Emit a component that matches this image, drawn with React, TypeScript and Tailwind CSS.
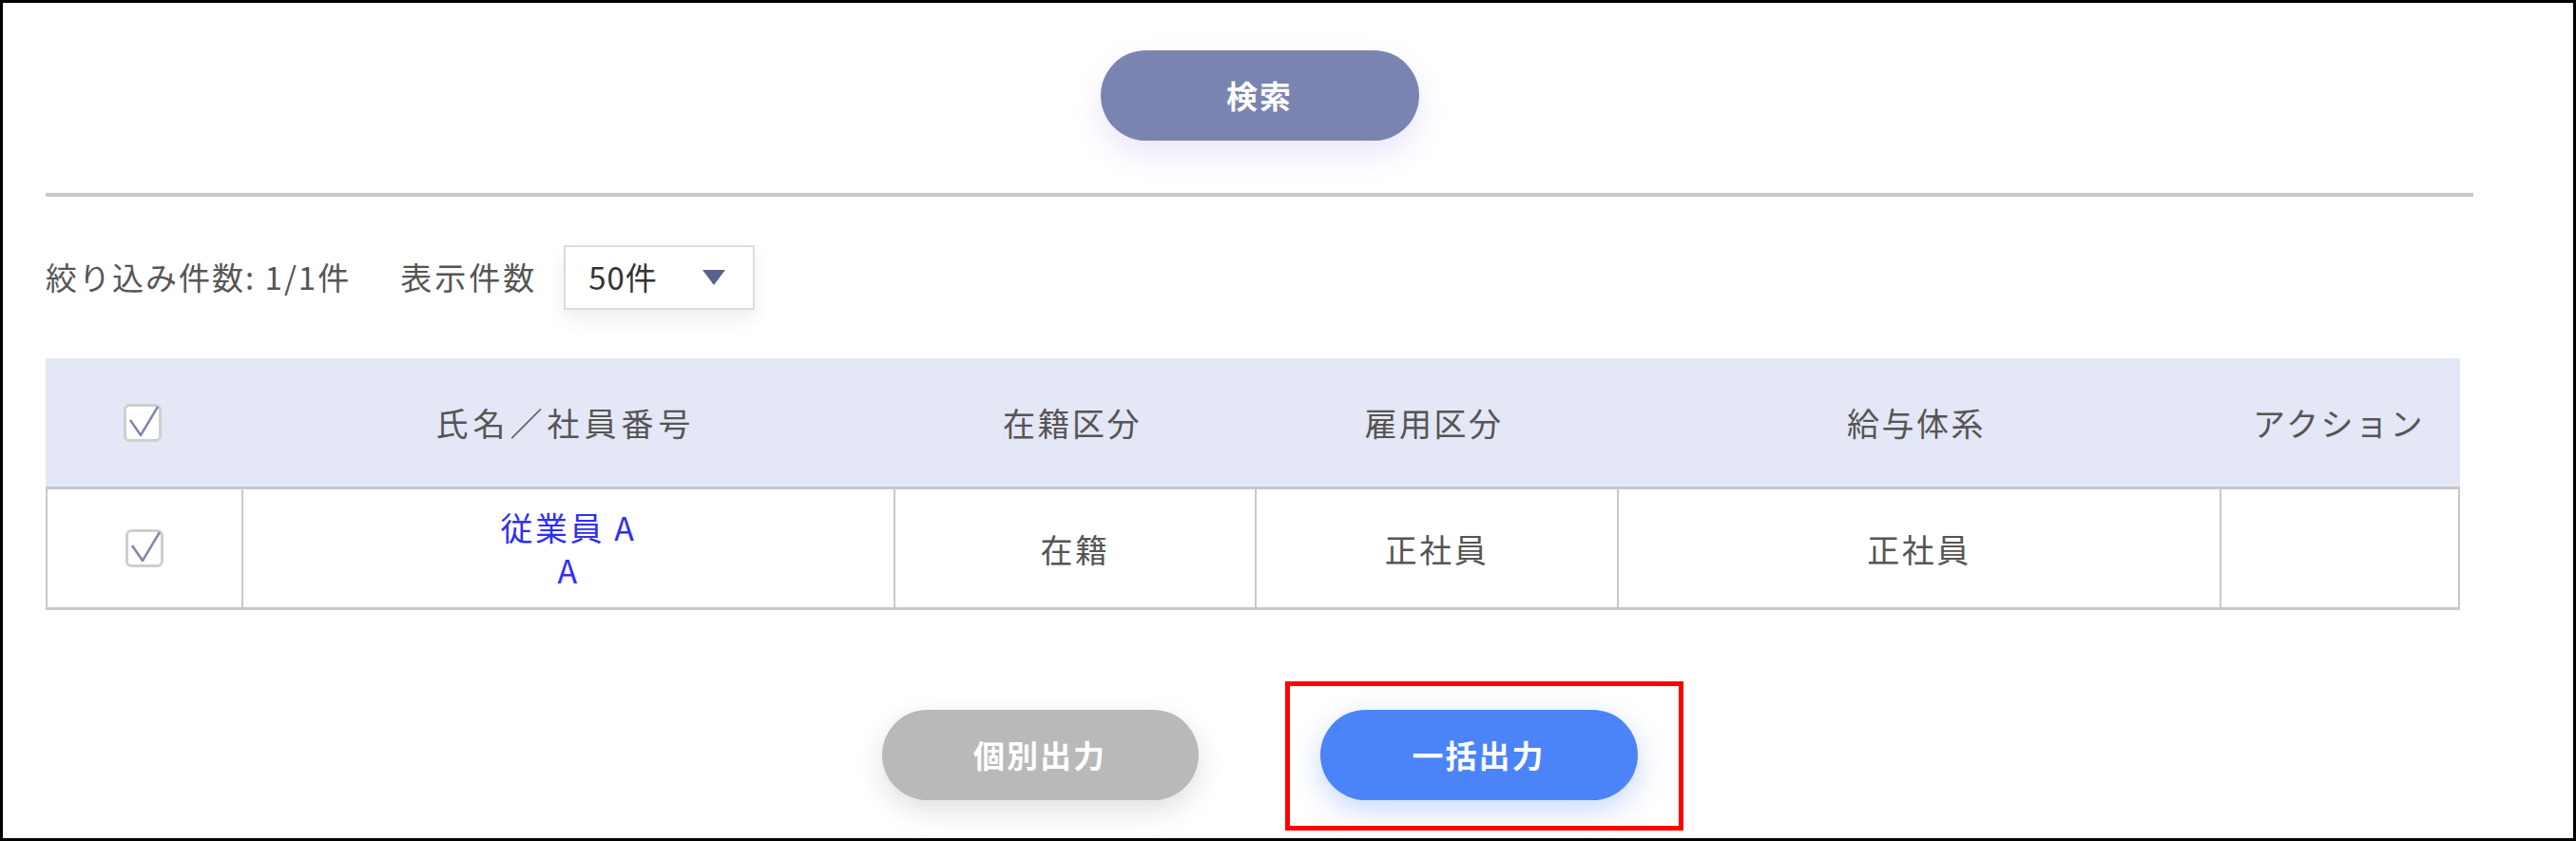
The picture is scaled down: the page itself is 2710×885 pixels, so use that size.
import React from "react";

const FONT = { fontFamily: '"Noto Sans CJK JP", "Noto Sans", sans-serif' };

function Check() {
  return (
    <svg width="40" height="40" viewBox="0 0 40 40">
      <rect x="1.5" y="1.5" width="37" height="37" rx="5" fill="#ffffff" stroke="#cfcfcf" strokeWidth="3" />
      <path d="M7 17 L18 33 L36 3" fill="none" stroke="#7f88aa" strokeWidth="2.5" strokeLinejoin="round" />
    </svg>
  );
}

export default function App() {
  const cell = "flex items-center justify-center";
  return (
    <div
      className="w-[2710px] h-[885px] border-[3px] border-black bg-white overflow-hidden"
      style={FONT}
    >
      <div className="w-[2554px] ml-[45px] pt-[50px] flex flex-col">
        {/* search */}
        <div className="flex justify-center">
          <button className="w-[335px] h-[95px] rounded-full bg-[#7a84b0] text-white text-[33px] font-semibold tracking-[2px] shadow-[0_14px_32px_rgba(120,100,230,0.16)]">
            検索
          </button>
        </div>
        <div className="mt-[55px] h-[4px] bg-[#c9c9c9]" />

        {/* filter row */}
        <div className="mt-[51px] flex items-center text-[33px] text-[#555]">
          <span className="tracking-[2px]">絞り込み件数: 1/1件</span>
          <span className="ml-[52px] tracking-[3px]">表示件数</span>
          <div className="ml-[28px] w-[201px] h-[68px] border-2 border-[#dcdcdc] bg-white shadow-[0_10px_18px_rgba(0,0,0,0.07)] flex items-center pl-[24px] pr-[28px] justify-between">
            <span className="text-[#333] tracking-[1px]">50件</span>
            <svg width="26" height="18" viewBox="0 0 26 18">
              <path d="M1 1 H25 L13 17 Z" fill="#5a6290" />
            </svg>
          </div>
        </div>

        {/* table */}
        <div className="mt-[51px] w-[2540px] text-[34px] text-[#555] tracking-[2.5px]">
          <div className="grid grid-cols-[204px_686px_380px_381px_634px_255px] h-[138px] bg-[#e4e7f5] border-b-[3px] border-[#c9c9c9]">
            <div className={cell}><Check /></div>
            <div className={`${cell} tracking-[5px]`}>氏名／社員番号</div>
            <div className={cell}>在籍区分</div>
            <div className={cell}>雇用区分</div>
            <div className={cell}>給与体系</div>
            <div className={cell}>アクション</div>
          </div>
          <div className="grid grid-cols-[204px_686px_380px_381px_634px_255px] h-[127px] border-x-2 border-b-[3px] border-[#c9c9c9]">
            <div className={cell}><Check /></div>
            <div className={`${cell} flex-col border-l-2 border-[#c9c9c9] leading-[45px] text-[#2f2ff5]`}>
              <span>従業員 A</span>
              <span>A</span>
            </div>
            <div className={`${cell} border-l-2 border-[#c9c9c9]`}>在籍</div>
            <div className={`${cell} border-l-2 border-[#c9c9c9]`}>正社員</div>
            <div className={`${cell} border-l-2 border-[#c9c9c9]`}>正社員</div>
            <div className={`${cell} border-l-2 border-[#c9c9c9]`}></div>
          </div>
        </div>

        {/* bottom buttons */}
        <div className="mt-[105px] flex justify-center gap-[128px]">
          <button className="w-[333px] h-[95px] rounded-full bg-[#b9b9b9] text-white text-[33px] font-semibold tracking-[2px] shadow-[0_10px_30px_rgba(0,0,0,0.13)]">
            個別出力
          </button>
          <div className="relative">
            <button className="w-[334px] h-[95px] rounded-full bg-[#4b84f8] text-white text-[33px] font-semibold tracking-[2px] shadow-[0_10px_30px_rgba(70,120,250,0.3)]">
              一括出力
            </button>
            <div className="absolute left-[-37px] top-[-30px] w-[419px] h-[157px] border-[5px] border-[#ff0000] pointer-events-none" />
          </div>
        </div>
      </div>
    </div>
  );
}
